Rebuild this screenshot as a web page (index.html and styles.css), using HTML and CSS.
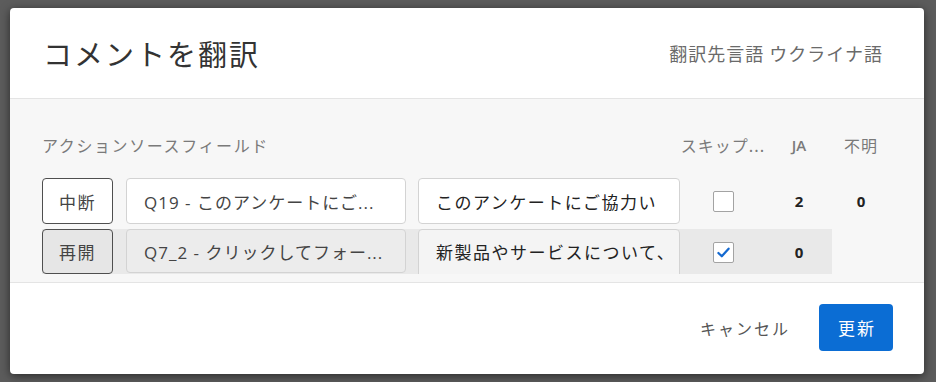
FILE: index.html
```html
<!DOCTYPE html>
<html lang="ja">
<head>
<meta charset="utf-8">
<link rel="stylesheet" href="styles.css">
</head>
<body>
<div class="backdrop">
  <div class="modal">
    <header class="modal-header">
      <h1 class="title">コメントを翻訳</h1>
      <div class="target">翻訳先言語 ウクライナ語</div>
    </header>
    <section class="modal-body">
      <div class="grid head-row">
        <div class="col-label">アクションソースフィールド</div>
        <div class="col-skip">スキップ...</div>
        <div class="col-num">JA</div>
        <div class="col-num2">不明</div>
      </div>
      <div class="rows">
        <div class="grid row">
          <button class="act-btn">中断</button>
          <div class="field">Q19 - このアンケートにご...</div>
          <div class="text-box">このアンケートにご協力い</div>
          <div class="cell-check"><span class="checkbox"></span></div>
          <div class="cell-num">2</div>
          <div class="cell-num">0</div>
        </div>
        <div class="grid row row-active">
          <button class="act-btn act-btn-active">再開</button>
          <div class="field field-muted">Q7_2 - クリックしてフォー...</div>
          <div class="text-box text-box-tall">新製品やサービスについて、</div>
          <div class="cell-check"><span class="checkbox checked"><svg viewBox="0 0 20 20" width="17" height="17"><path d="M4 10.5 L8 14.5 L16 5.5" fill="none" stroke="#1469d0" stroke-width="2.6" stroke-linecap="round" stroke-linejoin="round"/></svg></span></div>
          <div class="cell-num">0</div>
          <div class="cell-empty"></div>
        </div>
      </div>
    </section>
    <footer class="modal-footer">
      <button class="cancel">キャンセル</button>
      <button class="primary">更新</button>
    </footer>
  </div>
</div>
</body>
</html>
```

FILE: styles.css
```css
* { box-sizing: border-box; }
html, body { margin: 0; padding: 0; }
body {
  width: 936px;
  height: 382px;
  overflow: hidden;
  background: #5a5a5a;
  font-family: "Open Sans", "Noto Sans CJK JP", sans-serif;
}
.backdrop {
  width: 936px;
  height: 382px;
  padding: 8px 12px 8px 10px;
  background: #5c5c5c;
}
.modal {
  width: 914px;
  height: 366px;
  background: #fff;
  border-radius: 4px;
  box-shadow: 0 2px 10px rgba(0,0,0,0.55);
  display: flex;
  flex-direction: column;
  overflow: hidden;
}
.modal-header {
  height: 91px;
  flex: none;
  display: flex;
  align-items: center;
  justify-content: space-between;
  padding: 0 41px 0 33px;
  border-bottom: 1px solid #e4e4e4;
}
.title {
  margin: 0;
  font-weight: 400;
  font-size: 29px;
  letter-spacing: 2px;
  color: #333;
  font-family: "Noto Sans CJK JP", sans-serif;
}
.target {
  font-size: 18px;
  letter-spacing: 1px;
  color: #6a6a6a;
  font-family: "Noto Sans CJK JP", sans-serif;
}
.modal-body {
  height: 184px;
  flex: none;
  background: #f7f7f7;
  padding: 34px 0 0 32px;
  overflow: hidden;
  border-bottom: 1px solid #e4e4e4;
}
.grid {
  display: grid;
  grid-template-columns: 71px 13px 280px 12px 262px 86px 66px 58px;
  align-items: center;
}
.head-row {
  height: 20px;
  margin-bottom: 25px;
  font-size: 16px;
  color: #7a7a7a;
  font-family: "Noto Sans CJK JP", sans-serif;
}
.col-label { grid-column: 1 / 6; letter-spacing: 1.6px; }
.col-skip { grid-column: 6; text-align: center; letter-spacing: 1px; }
.col-num { grid-column: 7; text-align: center; font-family: "Open Sans", sans-serif; font-weight: 600; font-size: 15px; }
.col-num2 { grid-column: 8; text-align: center; letter-spacing: 1px; }
.rows {
  height: 96px;
  overflow: hidden;
  display: flex;
  flex-direction: column;
  gap: 5px;
}
.row {
  height: 46px;
  grid-template-rows: 46px;
  flex: none;
  width: 790px;
}
.row > .act-btn { grid-column: 1; }
.row > .field { grid-column: 3; }
.row > .text-box { grid-column: 5; }
.row > .cell-check { grid-column: 6; }
.row-active { background: #e9e9e9; }
.act-btn {
  height: 46px;
  width: 71px;
  border: 1.5px solid #4f4f4f;
  border-radius: 4px;
  background: #fff;
  font-family: "Noto Sans CJK JP", sans-serif;
  font-size: 17px;
  letter-spacing: 1.5px;
  color: #444;
  padding: 0;
}
.row-active .act-btn { height: 45px; align-self: start; }
.act-btn-active { background: #e6e6e6; }
.field {
  height: 46px;
  border: 1px solid #d3d3d3;
  border-radius: 4px;
  background: #fff;
  padding: 0 0 0 17px;
  display: flex;
  align-items: center;
  font-size: 17px;
  letter-spacing: 1px;
  color: #444;
  white-space: nowrap;
  overflow: hidden;
}
.row-active .field { height: 44px; align-self: start; }
.field-muted { background: #ececec; }
.text-box {
  height: 46px;
  border: 1px solid #d3d3d3;
  border-radius: 4px;
  background: #fff;
  padding: 0 0 0 17px;
  display: flex;
  align-items: center;
  font-family: "Noto Sans CJK JP", sans-serif;
  font-size: 17px;
  letter-spacing: 1.5px;
  color: #222;
  white-space: nowrap;
  overflow: hidden;
}
.text-box-tall { height: 60px; align-self: start; align-items: flex-start; padding-top: 9px; background: #f4f4f4; }
.cell-check { display: flex; justify-content: center; }
.checkbox {
  width: 21px;
  height: 21px;
  border: 1.5px solid #a3a3a3;
  border-radius: 2px;
  background: #fff;
  display: flex;
  align-items: center;
  justify-content: center;
}
.cell-num {
  text-align: center;
  font-weight: 700;
  font-size: 15px;
  color: #222;
}
.modal-footer {
  flex: 1;
  display: flex;
  align-items: center;
  justify-content: flex-end;
  padding: 0 31px 2px 0;
  gap: 29px;
}
.cancel {
  background: none;
  border: none;
  padding: 0;
  font-family: "Noto Sans CJK JP", sans-serif;
  font-size: 16px;
  letter-spacing: 2px;
  color: #555;
}
.primary {
  width: 74px;
  height: 47px;
  background: #0b6dd4;
  border: none;
  border-radius: 4px;
  color: #fff;
  font-family: "Noto Sans CJK JP", sans-serif;
  font-size: 17px;
  letter-spacing: 2px;
  padding: 0 0 0 2px;
}
```
